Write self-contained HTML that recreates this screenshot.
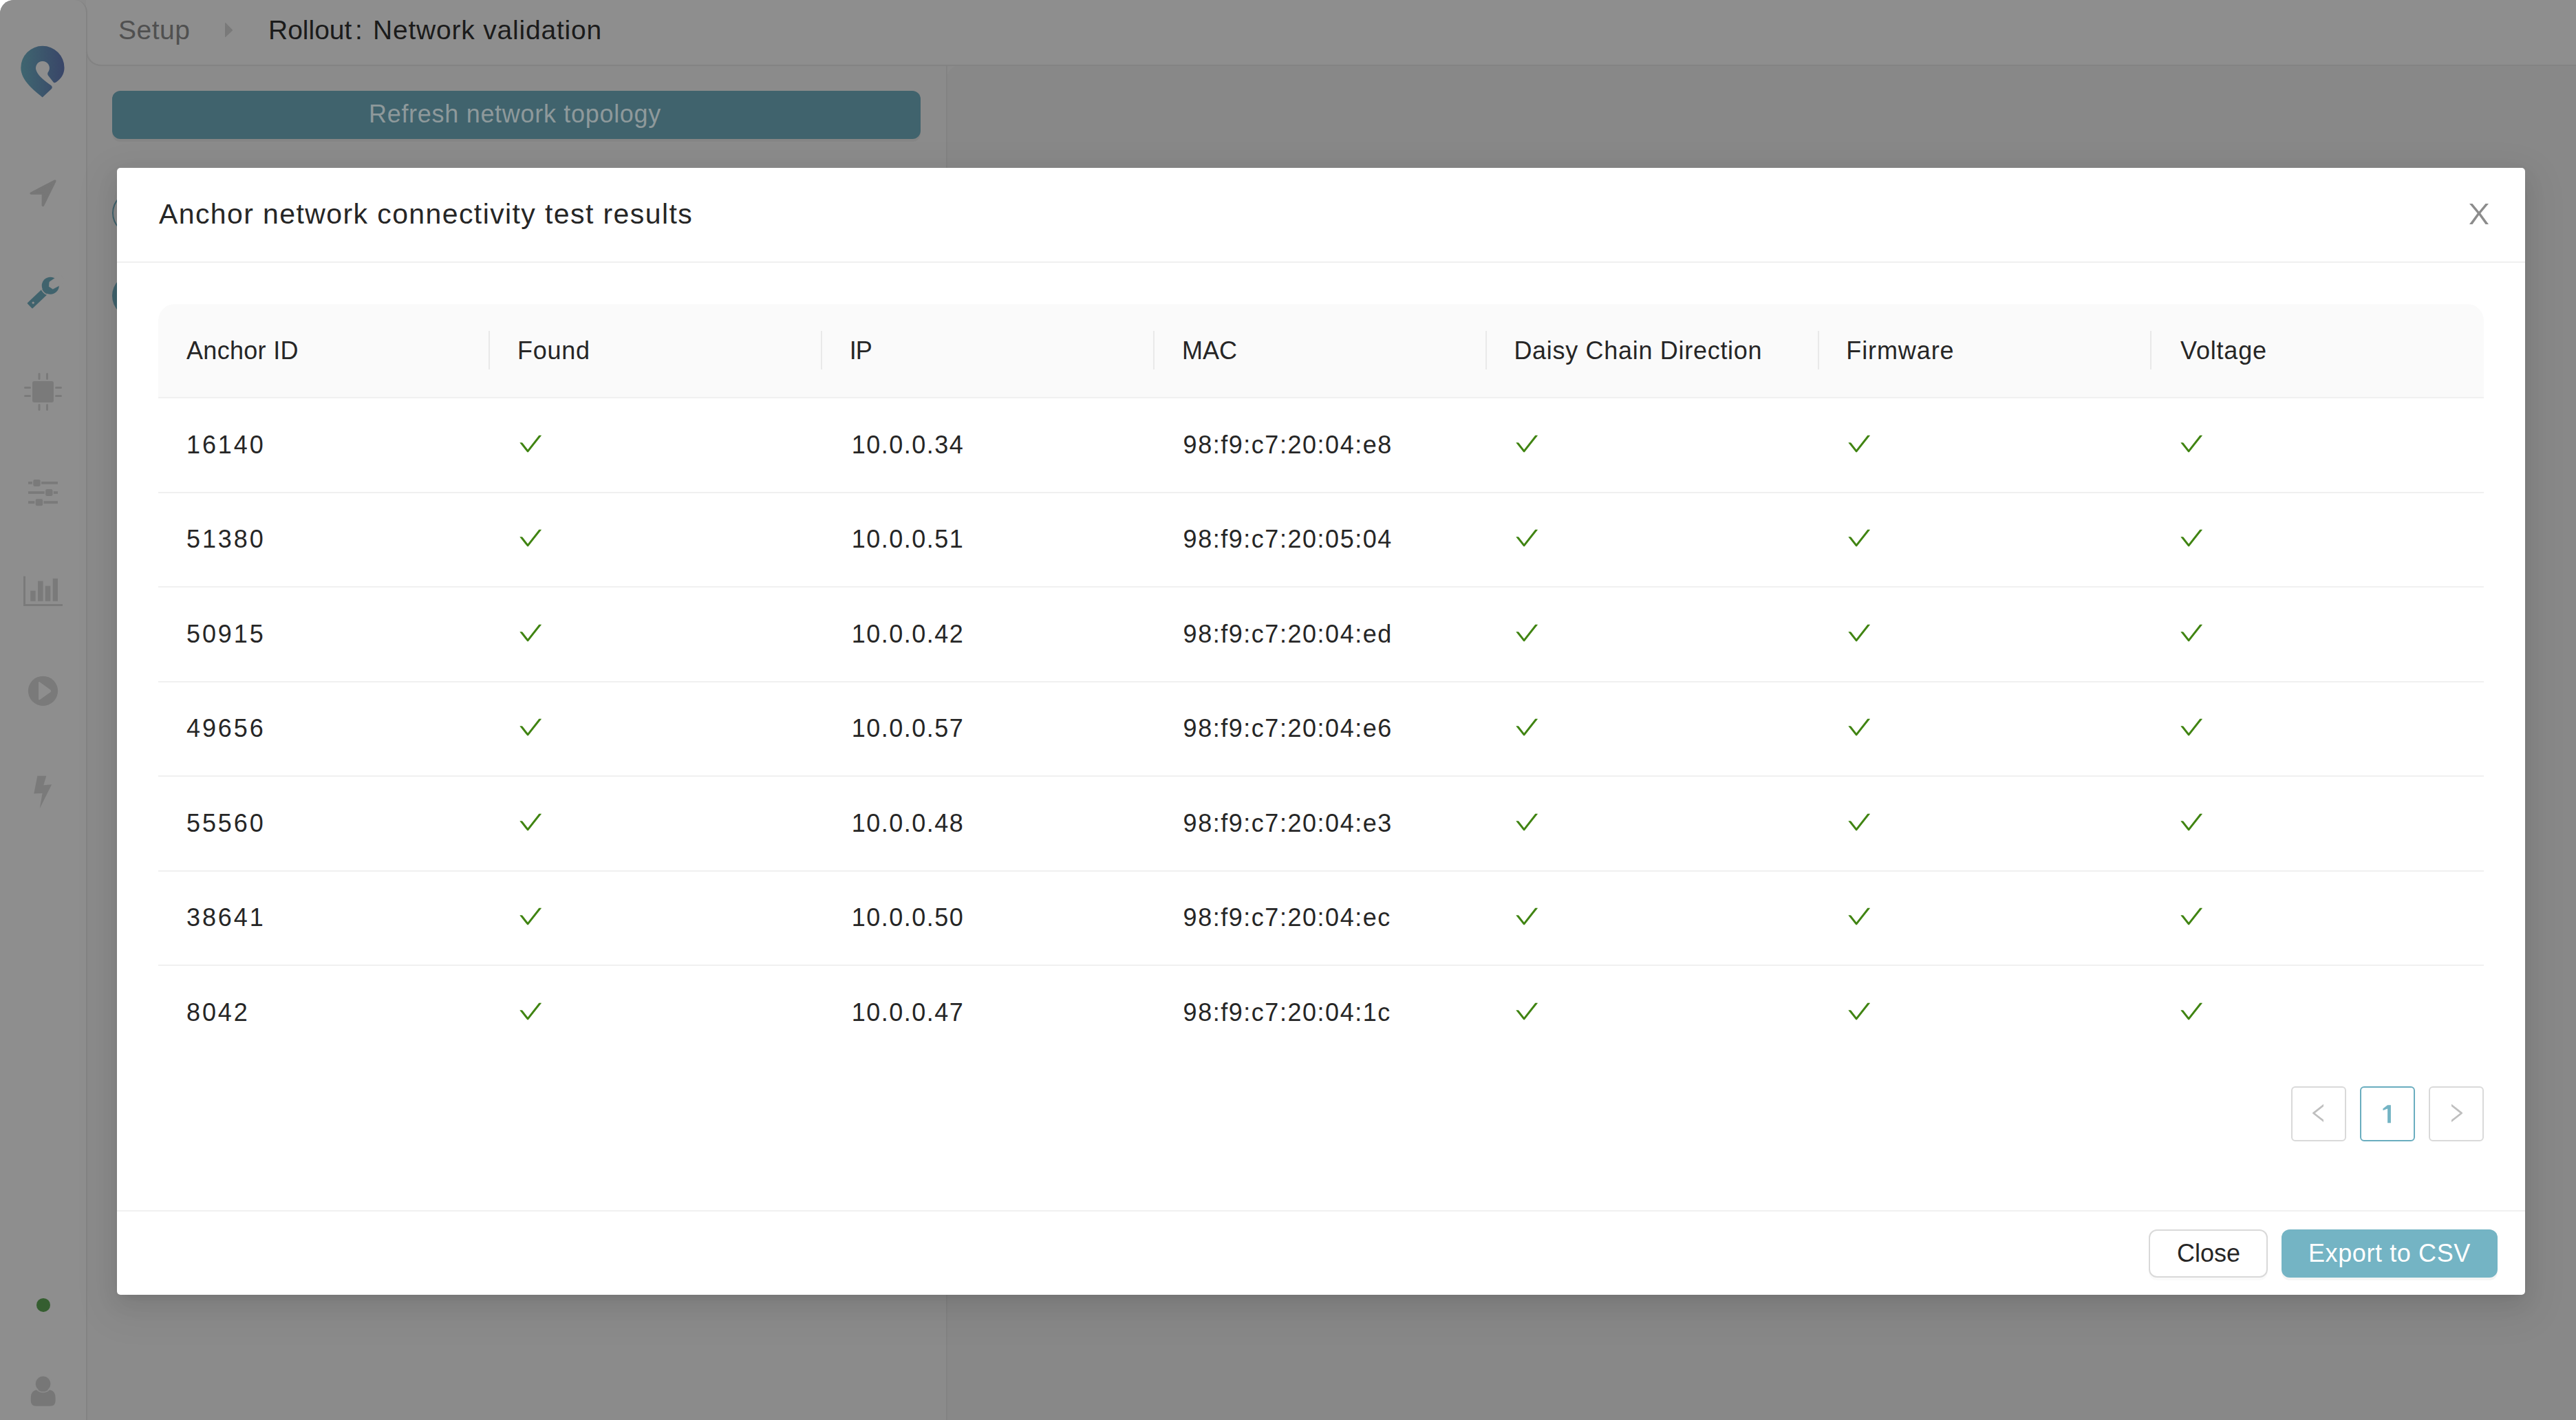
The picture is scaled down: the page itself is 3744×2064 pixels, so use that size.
<!DOCTYPE html><html><head><meta charset="utf-8"><style>
html,body{margin:0;padding:0;}
body{width:3744px;height:2064px;position:relative;overflow:hidden;background:#ffffff;font-family:"Liberation Sans", sans-serif;}
.t{position:absolute;white-space:nowrap;line-height:1;}
.a{position:absolute;box-sizing:border-box;}
</style></head><body>
<div class="a" style="left:0;top:0;width:3744px;height:2064px;background:#8b8b8b;border-top-left-radius:20px;"></div>
<div class="a" style="left:1377px;top:95px;width:2367px;height:1969px;background:#888888;border-top-left-radius:18px;"></div>
<div class="a" style="left:1375px;top:94px;width:2px;height:1970px;background:#838383;"></div>
<div class="a" style="left:125px;top:0;width:3619px;height:96px;background:#8e8e8e;border-bottom-left-radius:22px;border-bottom:2px solid #838383;"></div>
<div class="a" style="left:0;top:0;width:127px;height:2064px;background:#8e8e8e;border-top-left-radius:20px;border-top-right-radius:18px;border-right:2px solid #838383;"></div>
<div class="a" style="left:125px;top:30px;width:60px;height:66px;border-bottom-left-radius:22px;border-left:2px solid #838383;border-bottom:2px solid #838383;"></div>
<div class="t" style="left:172.0px;top:23.98px;font-size:39px;color:#505050;letter-spacing:0.5px;font-weight:400;">Setup</div>
<svg class="a" style="left:320px;top:30px" width="30" height="30"><path d="M7.6 3.6 L17.6 13.8 L7.6 23.4 Z" fill="#7a7a7a" stroke="#7a7a7a" stroke-width="1.2" stroke-linejoin="round"/></svg>
<div class="t" style="left:390.0px;top:23.98px;font-size:39px;color:#1b1b1b;letter-spacing:0px;font-weight:400;">Rollout</div>
<div class="t" style="left:516.0px;top:23.98px;font-size:39px;color:#1b1b1b;letter-spacing:0px;font-weight:400;">:</div>
<div class="t" style="left:542.0px;top:23.98px;font-size:39px;color:#1b1b1b;letter-spacing:0.8px;font-weight:400;">Network validation</div>
<div class="a" style="left:163px;top:132px;width:1175px;height:70px;background:#40636d;border-radius:12px;box-shadow:0 4px 0 rgba(0,0,0,0.045);"></div>
<div class="t" style="left:536.0px;top:148.42px;font-size:36px;color:#8e999b;letter-spacing:0.7px;font-weight:400;">Refresh network topology</div>
<div class="a" style="left:163px;top:278px;width:63px;height:63px;border-radius:50%;border:2.5px solid #40636d;"></div>
<div class="a" style="left:163px;top:398px;width:64px;height:64px;border-radius:50%;background:#40636d;"></div>
<svg class="a" style="left:0;top:0" width="126" height="2064" viewBox="0 0 126 2064">
<defs><linearGradient id="lg" x1="30" y1="0" x2="94" y2="0" gradientUnits="userSpaceOnUse"><stop offset="0" stop-color="#3f6670"/><stop offset="1" stop-color="#394568"/></linearGradient></defs>
<path fill="url(#lg)" fill-rule="evenodd" d="M61.7 141.4 C50 131.5 30.3 117 30.3 98.4 A31.6 31.6 0 0 1 93.5 98.4 C93.5 107.5 89 114 81.5 119.5 Q79.2 121.2 77.6 119.4 L69.8 109.6 Q68.2 106.6 70.8 103.6 A10 10 0 1 0 53.2 103.8 C56.5 111.5 65 117.5 74.4 124.3 Q77 126.8 74.8 129.2 Z"/>
<path fill="#777777" stroke="#777777" stroke-width="3.6" stroke-linejoin="round" d="M79.8 263.2 L45.2 281 L62.5 281 L62.4 298.4 Z"/>
<path d="M40.9 440.7 L61.5 421.3 L67.5 427.7 L46.9 447.1 Z" fill="#40636d" stroke="#40636d" stroke-width="2.2" stroke-linejoin="round"/>
<circle cx="73.3" cy="415.2" r="13.9" fill="none" stroke="#8e8e8e" stroke-width="1.6"/>
<circle cx="73.3" cy="415.2" r="12.5" fill="#40636d"/>
<path d="M79.6 404.6 L72 409.8 L71.4 416.4 L76.8 420 L86.2 415 L95 409 L86 396 Z" fill="#8e8e8e" stroke="#8e8e8e" stroke-width="0.8" stroke-linejoin="round"/>
<circle cx="48.2" cy="440.1" r="1.7" fill="#8e8e8e"/>
<g fill="#7a7a7a">
<rect x="47" y="554" width="31" height="31" rx="3"/>
<rect x="35" y="562" width="10" height="3" rx="1.5"/><rect x="35" y="574" width="10" height="3" rx="1.5"/>
<rect x="80" y="562" width="10" height="3" rx="1.5"/><rect x="80" y="574" width="10" height="3" rx="1.5"/>
<rect x="55.5" y="542" width="3" height="10" rx="1.5"/><rect x="67" y="542" width="3" height="10" rx="1.5"/>
<rect x="55.5" y="587" width="3" height="10" rx="1.5"/><rect x="67" y="587" width="3" height="10" rx="1.5"/>
<rect x="41" y="700" width="43" height="3.8"/><rect x="41" y="714.1" width="43" height="3.8"/><rect x="41" y="728.3" width="43" height="3.8"/>
</g>
<g fill="#7a7a7a" stroke="#8e8e8e" stroke-width="1.4">
<rect x="47.6" y="696.2" width="11.8" height="11.4" rx="3"/>
<rect x="65.4" y="710.4" width="11.8" height="11.4" rx="3"/>
<rect x="51" y="724.6" width="11.8" height="11.4" rx="3"/>
</g>
<g fill="#7a7a7a">
<rect x="34" y="837.5" width="3" height="43.5"/><rect x="34" y="878" width="57" height="3"/>
<rect x="44.2" y="858.6" width="7.4" height="15.2"/><rect x="55" y="844.5" width="7.6" height="29.3"/>
<rect x="65.7" y="851.6" width="7.6" height="22.2"/><rect x="76.7" y="840.9" width="7.3" height="32.9"/>
<circle cx="62.5" cy="1004.3" r="21.6"/>
<path d="M54.4 1127.8 L67.3 1127.8 L63.3 1141.2 L75.2 1140.2 L57.8 1175 L61.6 1153 L49.3 1153.6 Z"/>
</g>
<path d="M56 992 L56 1016 Q56 1018 58 1017 L73.5 1006 Q75 1004.3 73.5 1002.8 L58 991.5 Q56 990.5 56 992 Z" fill="#8e8e8e"/>
<circle cx="63" cy="1896.9" r="10" fill="#355e30"/>
<g fill="#777777">
<circle cx="62.6" cy="2011.3" r="10.8"/>
<path d="M44.8 2036 L44.8 2032 Q44.8 2020 56 2020 L69.5 2020 Q80.6 2020 80.6 2032 L80.6 2036 Q80.6 2043.7 73 2043.7 L52.4 2043.7 Q44.8 2043.7 44.8 2036 Z"/>
</g>
<circle cx="62.6" cy="2011.3" r="12.3" fill="none" stroke="#8e8e8e" stroke-width="1.5"/>
</svg>
<div class="a" style="left:170px;top:244px;width:3500px;height:1638px;background:#fff;border-radius:5px;box-shadow:0 12px 32px 0 rgba(0,0,0,0.08),0 6px 12px -8px rgba(0,0,0,0.12),0 18px 56px 16px rgba(0,0,0,0.05);"></div>
<div class="t" style="left:231.0px;top:291.39px;font-size:41px;color:#262626;letter-spacing:1.4px;font-weight:400;">Anchor network connectivity test results</div>
<svg class="a" style="left:3585px;top:292px" width="36" height="38" viewBox="0 0 36 38"><path fill="#8c8c8c" d="M4 4 L8.5 4 L18 15.5 L27.5 4 L32 4 L20.3 18 L32 34 L27.5 34 L18 20.8 L8.5 34 L4 34 L15.7 18 Z"/></svg>
<div class="a" style="left:170px;top:380px;width:3500px;height:2px;background:#f0f0f0;"></div>
<div class="a" style="left:230px;top:442px;width:3380px;height:135px;background:#fafafa;border-top-left-radius:24px;border-top-right-radius:24px;"></div>
<div class="a" style="left:230px;top:577px;width:3380px;height:2px;background:#f0f0f0;"></div>
<div class="t" style="left:271.0px;top:491.72px;font-size:36px;color:#262626;letter-spacing:0.3px;font-weight:400;">Anchor ID</div>
<div class="a" style="left:710px;top:481px;width:2px;height:56px;background:#e9e9e9;"></div>
<div class="t" style="left:751.9px;top:491.72px;font-size:36px;color:#262626;letter-spacing:0.75px;font-weight:400;">Found</div>
<div class="a" style="left:1193px;top:481px;width:2px;height:56px;background:#e9e9e9;"></div>
<div class="t" style="left:1234.7px;top:491.72px;font-size:36px;color:#262626;letter-spacing:-1px;font-weight:400;">IP</div>
<div class="a" style="left:1676px;top:481px;width:2px;height:56px;background:#e9e9e9;"></div>
<div class="t" style="left:1718.1px;top:491.72px;font-size:36px;color:#262626;letter-spacing:0px;font-weight:400;">MAC</div>
<div class="a" style="left:2159px;top:481px;width:2px;height:56px;background:#e9e9e9;"></div>
<div class="t" style="left:2200.4px;top:491.72px;font-size:36px;color:#262626;letter-spacing:0.7px;font-weight:400;">Daisy Chain Direction</div>
<div class="a" style="left:2642px;top:481px;width:2px;height:56px;background:#e9e9e9;"></div>
<div class="t" style="left:2683.3px;top:491.72px;font-size:36px;color:#262626;letter-spacing:0.9px;font-weight:400;">Firmware</div>
<div class="a" style="left:3125px;top:481px;width:2px;height:56px;background:#e9e9e9;"></div>
<div class="t" style="left:3169.1px;top:491.72px;font-size:36px;color:#262626;letter-spacing:0.8px;font-weight:400;">Voltage</div>
<div class="a" style="left:230px;top:715px;width:3380px;height:2px;background:#f0f0f0;"></div>
<div class="t" style="left:271.0px;top:628.72px;font-size:36px;color:#262626;letter-spacing:2.9px;font-weight:400;">16140</div>
<div class="t" style="left:1237.7px;top:628.72px;font-size:36px;color:#262626;letter-spacing:1.5px;font-weight:400;">10.0.0.34</div>
<div class="t" style="left:1719.6px;top:628.72px;font-size:36px;color:#262626;letter-spacing:1.53px;font-weight:400;">98:f9:c7:20:04:e8</div>
<svg class="a" style="left:753.7px;top:627.9px" width="34.45" height="34.45" viewBox="64 64 896 896" fill="#408412"><path d="M912 190h-69.9c-9.8 0-19.1 4.5-25.1 12.2L404.7 724.5 207 474a32 32 0 00-25.1-12.2H112c-6.7 0-10.4 7.7-6.3 12.9l273.9 347c12.8 16.2 37.4 16.2 50.3 0l488.4-618.9c4.1-5.1.4-12.8-6.3-12.8z"/></svg>
<svg class="a" style="left:2202.2px;top:627.9px" width="34.45" height="34.45" viewBox="64 64 896 896" fill="#408412"><path d="M912 190h-69.9c-9.8 0-19.1 4.5-25.1 12.2L404.7 724.5 207 474a32 32 0 00-25.1-12.2H112c-6.7 0-10.4 7.7-6.3 12.9l273.9 347c12.8 16.2 37.4 16.2 50.3 0l488.4-618.9c4.1-5.1.4-12.8-6.3-12.8z"/></svg>
<svg class="a" style="left:2685.1px;top:627.9px" width="34.45" height="34.45" viewBox="64 64 896 896" fill="#408412"><path d="M912 190h-69.9c-9.8 0-19.1 4.5-25.1 12.2L404.7 724.5 207 474a32 32 0 00-25.1-12.2H112c-6.7 0-10.4 7.7-6.3 12.9l273.9 347c12.8 16.2 37.4 16.2 50.3 0l488.4-618.9c4.1-5.1.4-12.8-6.3-12.8z"/></svg>
<svg class="a" style="left:3167.9px;top:627.9px" width="34.45" height="34.45" viewBox="64 64 896 896" fill="#408412"><path d="M912 190h-69.9c-9.8 0-19.1 4.5-25.1 12.2L404.7 724.5 207 474a32 32 0 00-25.1-12.2H112c-6.7 0-10.4 7.7-6.3 12.9l273.9 347c12.8 16.2 37.4 16.2 50.3 0l488.4-618.9c4.1-5.1.4-12.8-6.3-12.8z"/></svg>
<div class="a" style="left:230px;top:852px;width:3380px;height:2px;background:#f0f0f0;"></div>
<div class="t" style="left:271.0px;top:766.22px;font-size:36px;color:#262626;letter-spacing:2.9px;font-weight:400;">51380</div>
<div class="t" style="left:1237.7px;top:766.22px;font-size:36px;color:#262626;letter-spacing:1.5px;font-weight:400;">10.0.0.51</div>
<div class="t" style="left:1719.6px;top:766.22px;font-size:36px;color:#262626;letter-spacing:1.53px;font-weight:400;">98:f9:c7:20:05:04</div>
<svg class="a" style="left:753.7px;top:765.4px" width="34.45" height="34.45" viewBox="64 64 896 896" fill="#408412"><path d="M912 190h-69.9c-9.8 0-19.1 4.5-25.1 12.2L404.7 724.5 207 474a32 32 0 00-25.1-12.2H112c-6.7 0-10.4 7.7-6.3 12.9l273.9 347c12.8 16.2 37.4 16.2 50.3 0l488.4-618.9c4.1-5.1.4-12.8-6.3-12.8z"/></svg>
<svg class="a" style="left:2202.2px;top:765.4px" width="34.45" height="34.45" viewBox="64 64 896 896" fill="#408412"><path d="M912 190h-69.9c-9.8 0-19.1 4.5-25.1 12.2L404.7 724.5 207 474a32 32 0 00-25.1-12.2H112c-6.7 0-10.4 7.7-6.3 12.9l273.9 347c12.8 16.2 37.4 16.2 50.3 0l488.4-618.9c4.1-5.1.4-12.8-6.3-12.8z"/></svg>
<svg class="a" style="left:2685.1px;top:765.4px" width="34.45" height="34.45" viewBox="64 64 896 896" fill="#408412"><path d="M912 190h-69.9c-9.8 0-19.1 4.5-25.1 12.2L404.7 724.5 207 474a32 32 0 00-25.1-12.2H112c-6.7 0-10.4 7.7-6.3 12.9l273.9 347c12.8 16.2 37.4 16.2 50.3 0l488.4-618.9c4.1-5.1.4-12.8-6.3-12.8z"/></svg>
<svg class="a" style="left:3167.9px;top:765.4px" width="34.45" height="34.45" viewBox="64 64 896 896" fill="#408412"><path d="M912 190h-69.9c-9.8 0-19.1 4.5-25.1 12.2L404.7 724.5 207 474a32 32 0 00-25.1-12.2H112c-6.7 0-10.4 7.7-6.3 12.9l273.9 347c12.8 16.2 37.4 16.2 50.3 0l488.4-618.9c4.1-5.1.4-12.8-6.3-12.8z"/></svg>
<div class="a" style="left:230px;top:990px;width:3380px;height:2px;background:#f0f0f0;"></div>
<div class="t" style="left:271.0px;top:903.72px;font-size:36px;color:#262626;letter-spacing:2.9px;font-weight:400;">50915</div>
<div class="t" style="left:1237.7px;top:903.72px;font-size:36px;color:#262626;letter-spacing:1.5px;font-weight:400;">10.0.0.42</div>
<div class="t" style="left:1719.6px;top:903.72px;font-size:36px;color:#262626;letter-spacing:1.53px;font-weight:400;">98:f9:c7:20:04:ed</div>
<svg class="a" style="left:753.7px;top:902.9px" width="34.45" height="34.45" viewBox="64 64 896 896" fill="#408412"><path d="M912 190h-69.9c-9.8 0-19.1 4.5-25.1 12.2L404.7 724.5 207 474a32 32 0 00-25.1-12.2H112c-6.7 0-10.4 7.7-6.3 12.9l273.9 347c12.8 16.2 37.4 16.2 50.3 0l488.4-618.9c4.1-5.1.4-12.8-6.3-12.8z"/></svg>
<svg class="a" style="left:2202.2px;top:902.9px" width="34.45" height="34.45" viewBox="64 64 896 896" fill="#408412"><path d="M912 190h-69.9c-9.8 0-19.1 4.5-25.1 12.2L404.7 724.5 207 474a32 32 0 00-25.1-12.2H112c-6.7 0-10.4 7.7-6.3 12.9l273.9 347c12.8 16.2 37.4 16.2 50.3 0l488.4-618.9c4.1-5.1.4-12.8-6.3-12.8z"/></svg>
<svg class="a" style="left:2685.1px;top:902.9px" width="34.45" height="34.45" viewBox="64 64 896 896" fill="#408412"><path d="M912 190h-69.9c-9.8 0-19.1 4.5-25.1 12.2L404.7 724.5 207 474a32 32 0 00-25.1-12.2H112c-6.7 0-10.4 7.7-6.3 12.9l273.9 347c12.8 16.2 37.4 16.2 50.3 0l488.4-618.9c4.1-5.1.4-12.8-6.3-12.8z"/></svg>
<svg class="a" style="left:3167.9px;top:902.9px" width="34.45" height="34.45" viewBox="64 64 896 896" fill="#408412"><path d="M912 190h-69.9c-9.8 0-19.1 4.5-25.1 12.2L404.7 724.5 207 474a32 32 0 00-25.1-12.2H112c-6.7 0-10.4 7.7-6.3 12.9l273.9 347c12.8 16.2 37.4 16.2 50.3 0l488.4-618.9c4.1-5.1.4-12.8-6.3-12.8z"/></svg>
<div class="a" style="left:230px;top:1127px;width:3380px;height:2px;background:#f0f0f0;"></div>
<div class="t" style="left:271.0px;top:1041.22px;font-size:36px;color:#262626;letter-spacing:2.9px;font-weight:400;">49656</div>
<div class="t" style="left:1237.7px;top:1041.22px;font-size:36px;color:#262626;letter-spacing:1.5px;font-weight:400;">10.0.0.57</div>
<div class="t" style="left:1719.6px;top:1041.22px;font-size:36px;color:#262626;letter-spacing:1.53px;font-weight:400;">98:f9:c7:20:04:e6</div>
<svg class="a" style="left:753.7px;top:1040.4px" width="34.45" height="34.45" viewBox="64 64 896 896" fill="#408412"><path d="M912 190h-69.9c-9.8 0-19.1 4.5-25.1 12.2L404.7 724.5 207 474a32 32 0 00-25.1-12.2H112c-6.7 0-10.4 7.7-6.3 12.9l273.9 347c12.8 16.2 37.4 16.2 50.3 0l488.4-618.9c4.1-5.1.4-12.8-6.3-12.8z"/></svg>
<svg class="a" style="left:2202.2px;top:1040.4px" width="34.45" height="34.45" viewBox="64 64 896 896" fill="#408412"><path d="M912 190h-69.9c-9.8 0-19.1 4.5-25.1 12.2L404.7 724.5 207 474a32 32 0 00-25.1-12.2H112c-6.7 0-10.4 7.7-6.3 12.9l273.9 347c12.8 16.2 37.4 16.2 50.3 0l488.4-618.9c4.1-5.1.4-12.8-6.3-12.8z"/></svg>
<svg class="a" style="left:2685.1px;top:1040.4px" width="34.45" height="34.45" viewBox="64 64 896 896" fill="#408412"><path d="M912 190h-69.9c-9.8 0-19.1 4.5-25.1 12.2L404.7 724.5 207 474a32 32 0 00-25.1-12.2H112c-6.7 0-10.4 7.7-6.3 12.9l273.9 347c12.8 16.2 37.4 16.2 50.3 0l488.4-618.9c4.1-5.1.4-12.8-6.3-12.8z"/></svg>
<svg class="a" style="left:3167.9px;top:1040.4px" width="34.45" height="34.45" viewBox="64 64 896 896" fill="#408412"><path d="M912 190h-69.9c-9.8 0-19.1 4.5-25.1 12.2L404.7 724.5 207 474a32 32 0 00-25.1-12.2H112c-6.7 0-10.4 7.7-6.3 12.9l273.9 347c12.8 16.2 37.4 16.2 50.3 0l488.4-618.9c4.1-5.1.4-12.8-6.3-12.8z"/></svg>
<div class="a" style="left:230px;top:1265px;width:3380px;height:2px;background:#f0f0f0;"></div>
<div class="t" style="left:271.0px;top:1178.72px;font-size:36px;color:#262626;letter-spacing:2.9px;font-weight:400;">55560</div>
<div class="t" style="left:1237.7px;top:1178.72px;font-size:36px;color:#262626;letter-spacing:1.5px;font-weight:400;">10.0.0.48</div>
<div class="t" style="left:1719.6px;top:1178.72px;font-size:36px;color:#262626;letter-spacing:1.53px;font-weight:400;">98:f9:c7:20:04:e3</div>
<svg class="a" style="left:753.7px;top:1177.9px" width="34.45" height="34.45" viewBox="64 64 896 896" fill="#408412"><path d="M912 190h-69.9c-9.8 0-19.1 4.5-25.1 12.2L404.7 724.5 207 474a32 32 0 00-25.1-12.2H112c-6.7 0-10.4 7.7-6.3 12.9l273.9 347c12.8 16.2 37.4 16.2 50.3 0l488.4-618.9c4.1-5.1.4-12.8-6.3-12.8z"/></svg>
<svg class="a" style="left:2202.2px;top:1177.9px" width="34.45" height="34.45" viewBox="64 64 896 896" fill="#408412"><path d="M912 190h-69.9c-9.8 0-19.1 4.5-25.1 12.2L404.7 724.5 207 474a32 32 0 00-25.1-12.2H112c-6.7 0-10.4 7.7-6.3 12.9l273.9 347c12.8 16.2 37.4 16.2 50.3 0l488.4-618.9c4.1-5.1.4-12.8-6.3-12.8z"/></svg>
<svg class="a" style="left:2685.1px;top:1177.9px" width="34.45" height="34.45" viewBox="64 64 896 896" fill="#408412"><path d="M912 190h-69.9c-9.8 0-19.1 4.5-25.1 12.2L404.7 724.5 207 474a32 32 0 00-25.1-12.2H112c-6.7 0-10.4 7.7-6.3 12.9l273.9 347c12.8 16.2 37.4 16.2 50.3 0l488.4-618.9c4.1-5.1.4-12.8-6.3-12.8z"/></svg>
<svg class="a" style="left:3167.9px;top:1177.9px" width="34.45" height="34.45" viewBox="64 64 896 896" fill="#408412"><path d="M912 190h-69.9c-9.8 0-19.1 4.5-25.1 12.2L404.7 724.5 207 474a32 32 0 00-25.1-12.2H112c-6.7 0-10.4 7.7-6.3 12.9l273.9 347c12.8 16.2 37.4 16.2 50.3 0l488.4-618.9c4.1-5.1.4-12.8-6.3-12.8z"/></svg>
<div class="a" style="left:230px;top:1402px;width:3380px;height:2px;background:#f0f0f0;"></div>
<div class="t" style="left:271.0px;top:1316.22px;font-size:36px;color:#262626;letter-spacing:2.9px;font-weight:400;">38641</div>
<div class="t" style="left:1237.7px;top:1316.22px;font-size:36px;color:#262626;letter-spacing:1.5px;font-weight:400;">10.0.0.50</div>
<div class="t" style="left:1719.6px;top:1316.22px;font-size:36px;color:#262626;letter-spacing:1.53px;font-weight:400;">98:f9:c7:20:04:ec</div>
<svg class="a" style="left:753.7px;top:1315.4px" width="34.45" height="34.45" viewBox="64 64 896 896" fill="#408412"><path d="M912 190h-69.9c-9.8 0-19.1 4.5-25.1 12.2L404.7 724.5 207 474a32 32 0 00-25.1-12.2H112c-6.7 0-10.4 7.7-6.3 12.9l273.9 347c12.8 16.2 37.4 16.2 50.3 0l488.4-618.9c4.1-5.1.4-12.8-6.3-12.8z"/></svg>
<svg class="a" style="left:2202.2px;top:1315.4px" width="34.45" height="34.45" viewBox="64 64 896 896" fill="#408412"><path d="M912 190h-69.9c-9.8 0-19.1 4.5-25.1 12.2L404.7 724.5 207 474a32 32 0 00-25.1-12.2H112c-6.7 0-10.4 7.7-6.3 12.9l273.9 347c12.8 16.2 37.4 16.2 50.3 0l488.4-618.9c4.1-5.1.4-12.8-6.3-12.8z"/></svg>
<svg class="a" style="left:2685.1px;top:1315.4px" width="34.45" height="34.45" viewBox="64 64 896 896" fill="#408412"><path d="M912 190h-69.9c-9.8 0-19.1 4.5-25.1 12.2L404.7 724.5 207 474a32 32 0 00-25.1-12.2H112c-6.7 0-10.4 7.7-6.3 12.9l273.9 347c12.8 16.2 37.4 16.2 50.3 0l488.4-618.9c4.1-5.1.4-12.8-6.3-12.8z"/></svg>
<svg class="a" style="left:3167.9px;top:1315.4px" width="34.45" height="34.45" viewBox="64 64 896 896" fill="#408412"><path d="M912 190h-69.9c-9.8 0-19.1 4.5-25.1 12.2L404.7 724.5 207 474a32 32 0 00-25.1-12.2H112c-6.7 0-10.4 7.7-6.3 12.9l273.9 347c12.8 16.2 37.4 16.2 50.3 0l488.4-618.9c4.1-5.1.4-12.8-6.3-12.8z"/></svg>
<div class="t" style="left:271.0px;top:1453.72px;font-size:36px;color:#262626;letter-spacing:2.9px;font-weight:400;">8042</div>
<div class="t" style="left:1237.7px;top:1453.72px;font-size:36px;color:#262626;letter-spacing:1.5px;font-weight:400;">10.0.0.47</div>
<div class="t" style="left:1719.6px;top:1453.72px;font-size:36px;color:#262626;letter-spacing:1.53px;font-weight:400;">98:f9:c7:20:04:1c</div>
<svg class="a" style="left:753.7px;top:1452.9px" width="34.45" height="34.45" viewBox="64 64 896 896" fill="#408412"><path d="M912 190h-69.9c-9.8 0-19.1 4.5-25.1 12.2L404.7 724.5 207 474a32 32 0 00-25.1-12.2H112c-6.7 0-10.4 7.7-6.3 12.9l273.9 347c12.8 16.2 37.4 16.2 50.3 0l488.4-618.9c4.1-5.1.4-12.8-6.3-12.8z"/></svg>
<svg class="a" style="left:2202.2px;top:1452.9px" width="34.45" height="34.45" viewBox="64 64 896 896" fill="#408412"><path d="M912 190h-69.9c-9.8 0-19.1 4.5-25.1 12.2L404.7 724.5 207 474a32 32 0 00-25.1-12.2H112c-6.7 0-10.4 7.7-6.3 12.9l273.9 347c12.8 16.2 37.4 16.2 50.3 0l488.4-618.9c4.1-5.1.4-12.8-6.3-12.8z"/></svg>
<svg class="a" style="left:2685.1px;top:1452.9px" width="34.45" height="34.45" viewBox="64 64 896 896" fill="#408412"><path d="M912 190h-69.9c-9.8 0-19.1 4.5-25.1 12.2L404.7 724.5 207 474a32 32 0 00-25.1-12.2H112c-6.7 0-10.4 7.7-6.3 12.9l273.9 347c12.8 16.2 37.4 16.2 50.3 0l488.4-618.9c4.1-5.1.4-12.8-6.3-12.8z"/></svg>
<svg class="a" style="left:3167.9px;top:1452.9px" width="34.45" height="34.45" viewBox="64 64 896 896" fill="#408412"><path d="M912 190h-69.9c-9.8 0-19.1 4.5-25.1 12.2L404.7 724.5 207 474a32 32 0 00-25.1-12.2H112c-6.7 0-10.4 7.7-6.3 12.9l273.9 347c12.8 16.2 37.4 16.2 50.3 0l488.4-618.9c4.1-5.1.4-12.8-6.3-12.8z"/></svg>
<div class="a" style="left:3330px;top:1579px;width:80px;height:80px;border:2px solid #d9d9d9;border-radius:6px;background:#fff;"><svg style="position:absolute;left:29px;top:24.3px" width="16.2" height="25.8" viewBox="248 133 476 758"><path fill="#bfbfbf" d="M724 218.3V141c0-6.7-7.7-10.4-12.9-6.3L260.3 486.8a31.86 31.86 0 000 50.3l450.8 352.1c5.3 4.1 12.9.4 12.9-6.3v-77.3c0-4.9-2.3-9.6-6.1-12.6l-360-281 360-281.1c3.8-3 6.1-7.7 6.1-12.6z"/></svg></div>
<div class="a" style="left:3430px;top:1579px;width:80px;height:80px;border:2px solid #6aadbf;border-radius:6px;background:#fff;"></div>
<svg class="a" style="left:3460px;top:1604px" width="20" height="32" viewBox="0 0 20 32"><path fill="#74b4c4" d="M10.1 2.2 L14.9 2.2 L14.9 28.3 L10.1 28.3 L10.1 7.4 L3.6 9.9 L3.3 7.6 Z"/></svg>
<div class="a" style="left:3530px;top:1579px;width:80px;height:80px;border:2px solid #d9d9d9;border-radius:6px;background:#fff;"><svg style="position:absolute;left:30.7px;top:24.3px" width="16.2" height="25.8" viewBox="302 133 476 758"><path fill="#bfbfbf" d="M765.7 486.8L314.9 134.7A7.97 7.97 0 00302 141v77.3c0 4.9 2.3 9.6 6.1 12.6l360 281.1-360 281.1c-3.9 3-6.1 7.7-6.1 12.6V883c0 6.7 7.7 10.4 12.9 6.3l450.8-352.1a31.96 31.96 0 000-50.4z"/></svg></div>
<div class="a" style="left:170px;top:1759px;width:3500px;height:2px;background:#f0f0f0;"></div>
<div class="a" style="left:3123px;top:1787px;width:173px;height:70px;border:2px solid #d9d9d9;border-radius:12px;background:#fff;box-shadow:0 4px 0 rgba(0,0,0,0.02);"></div>
<div class="t" style="left:3164.0px;top:1803.52px;font-size:36px;color:#262626;letter-spacing:0px;font-weight:400;">Close</div>
<div class="a" style="left:3316px;top:1787px;width:314px;height:70px;border-radius:12px;background:#74b4c4;box-shadow:0 4px 0 rgba(0,0,0,0.04);"></div>
<div class="t" style="left:3355.0px;top:1803.52px;font-size:36px;color:#ffffff;letter-spacing:0.6px;font-weight:400;">Export to CSV</div>
</body></html>
